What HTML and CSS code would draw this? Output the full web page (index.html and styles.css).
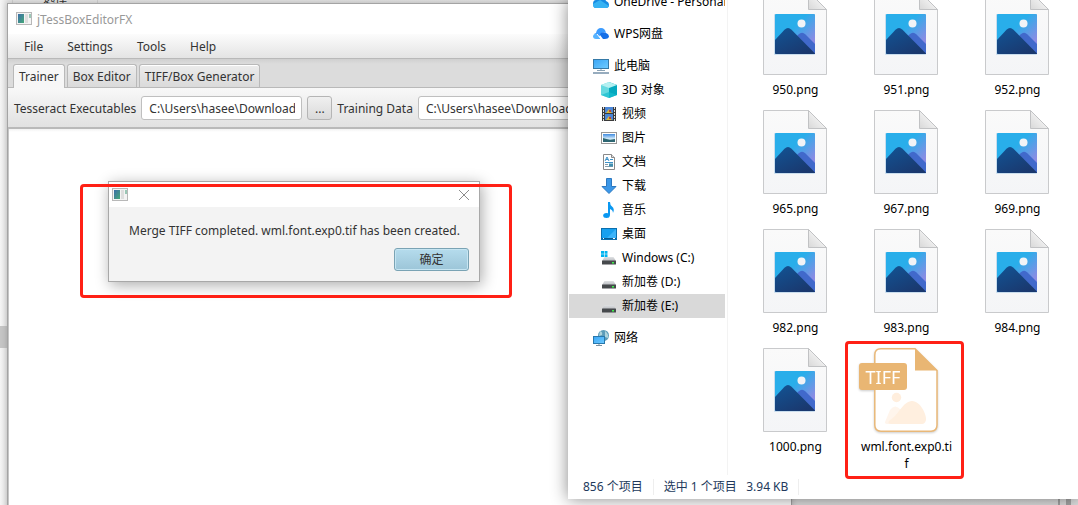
FILE: index.html
```html
<!DOCTYPE html>
<html lang="zh-CN">
<head>
<meta charset="utf-8">
<title>jTessBoxEditorFX</title>
<link rel="stylesheet" href="styles.css">
</head>
<body>
<svg width="0" height="0" class="defs" aria-hidden="true">
  <defs>
    <linearGradient id="paper" x1="0" y1="0" x2="0" y2="1"><stop offset="0" stop-color="#fafafa"/><stop offset="1" stop-color="#f4f5f7"/></linearGradient>
    <linearGradient id="fold" x1="0" y1="1" x2="1" y2="0"><stop offset="0" stop-color="#d8d8d8"/><stop offset=".6" stop-color="#f2f2f2"/></linearGradient>
    <linearGradient id="sky" x1="0" y1="0" x2="1" y2="1"><stop offset=".4" stop-color="#29aeea"/><stop offset=".8" stop-color="#8a8ce4"/></linearGradient>
    <linearGradient id="hill" x1="0" y1="0" x2=".7" y2="1"><stop offset="0" stop-color="#125495"/><stop offset="1" stop-color="#1a386e"/></linearGradient>
    <linearGradient id="screen" x1="0" y1="0" x2="1" y2="1"><stop offset="0" stop-color="#3aa5f5"/><stop offset="1" stop-color="#6fcbff"/></linearGradient>
    <linearGradient id="photo" x1="0" y1="0" x2="0" y2="1"><stop offset="0" stop-color="#3f8be0"/><stop offset=".6" stop-color="#d5ecfa"/><stop offset="1" stop-color="#2c6d78"/></linearGradient>
    <linearGradient id="appicon" x1="0" y1="0" x2="1" y2="1"><stop offset="0" stop-color="#3c6ea8"/><stop offset="1" stop-color="#45a878"/></linearGradient>
    <linearGradient id="drive" x1="0" y1="0" x2="0" y2="1"><stop offset="0" stop-color="#e0e2e4"/><stop offset="1" stop-color="#b9bcc0"/></linearGradient>
    <symbol id="i-app" viewBox="0 0 16 14">
      <rect x=".5" y=".5" width="15" height="12" fill="#f4f4f4" stroke="#b8b8b8"/>
      <rect x="2" y="2" width="6" height="9" fill="url(#appicon)"/><rect x="9" y="2" width="3" height="9" fill="#dedede"/><path d="M13 2h2v4h-2z" fill="#9bc7b6"/>
    </symbol>
    <symbol id="i-png" viewBox="0 0 64 84">
      <path d="M.5 .5H45.500L63.500 18.500V83.500H.5Z" fill="url(#paper)" stroke="#c9cacc"/>
      <path d="M45.500 .5V18.500H63.500Z" fill="url(#fold)" stroke="#c1c2c4"/>
      <rect x="11" y="23" width="41" height="41" rx="1" fill="#c9dded"/>
      <rect x="12" y="23" width="40" height="40" rx="1" fill="url(#sky)"/>
      <circle cx="38.500" cy="32.500" r="4" fill="#f1f3f6"/>
      <path d="M25 54L35.500 43.500Q39 40 42.500 43.500L52 53V63H25Z" fill="#4169cb"/>
      <path d="M12 49L21.500 38.800Q25 35.300 28.500 38.800L52 62.500Q52 63 51 63H13Q12 63 12 62Z" fill="url(#hill)"/>
    </symbol>
    <symbol id="i-drive" viewBox="0 0 16 16">
      <path d="M3.500 7H12.500L15 11H1Z" fill="url(#drive)"/><rect x="1" y="10.500" width="14" height="4" rx=".6" fill="#46494c"/><rect x="11" y="12" width="2" height="1.500" fill="#3df04a"/>
    </symbol>
  </defs>
</svg>

<div class="desktop">
  <div class="backdrop">
    <span class="backdrop-tab">选择</span>
    <span class="backdrop-thumb"></span>
    <span class="backdrop-edge"></span>
  </div>

  <main class="window app">
    <header class="titlebar"><svg class="app-icon"><use href="#i-app"/></svg><span>jTessBoxEditorFX</span></header>
    <nav class="menubar">
      <button>File</button><button>Settings</button><button>Tools</button><button>Help</button>
    </nav>
    <div class="tabs" role="tablist">
      <button class="tab active" role="tab" aria-selected="true">Trainer</button>
      <button class="tab" role="tab">Box Editor</button>
      <button class="tab" role="tab">TIFF/Box Generator</button>
    </div>
    <div class="toolbar">
      <label for="exe">Tesseract Executables</label>
      <input id="exe" type="text" value="C:\Users\hasee\Downloads">
      <button class="browse">...</button>
      <label for="data">Training Data</label>
      <input id="data" class="data" type="text" value="C:\Users\hasee\Downloads">
    </div>
    <div class="workspace"></div>
  </main>

  <section class="window dialog" role="dialog" aria-labelledby="msg">
    <header class="dialog-title">
      <svg class="app-icon"><use href="#i-app"/></svg>
      <button class="close" aria-label="Close"><svg width="12" height="12"><path d="M1 1L11 11M11 1L1 11" stroke="#8c8c8c" fill="none"/></svg></button>
    </header>
    <div class="dialog-body">
      <p id="msg">Merge TIFF completed. wml.font.exp0.tif has been created.</p>
      <button class="ok">确定</button>
    </div>
  </section>
  <div class="mark mark-dialog"></div>

  <section class="window explorer">
    <div class="panes">
      <nav class="tree">
        <a class="node root"><svg viewBox="0 0 16 16"><path d="M2 14Q0 13 0 10Q0 6 3 6Q5 2 9 3Q12 4 13 7Q16 8 16 11Q16 14 13 14Z" fill="#168be2"/><path d="M0 10L7 6L16 12Q15 14 13 14H3Q0 14 0 10Z" fill="#35b2f3"/></svg>OneDrive - Personal</a>
        <a class="node root"><svg viewBox="0 0 16 16"><path d="M3 7Q4 2 8 2Q12 2 13 7Q10 5 8 8L5 12Q4 8 1 8Z" fill="#3c9cff"/><path d="M0 10Q1 7 4 8L8 13H3Q0 13 0 10Z" fill="#57b3ff"/><path d="M7 8Q9 5 13 7Q16 8 16 11Q15 13 12 13H10L7 9Z" fill="#1670e8"/><path d="M4 8L8 13" stroke="#fff"/></svg>WPS网盘</a>
        <a class="node root"><svg viewBox="0 0 16 16"><rect x=".5" y="1.500" width="15" height="9" fill="url(#screen)" stroke="#3579a7"/><path d="M8 11V13M4 12.500H12" stroke="#8ba3b5"/><path d="M0 15H16" stroke="#7490a8" stroke-width="1.500"/></svg>此电脑</a>
        <a class="node"><svg viewBox="0 0 16 16"><path d="M0 3L8 0V16L0 13Z" fill="#67d9e0"/><path d="M8 0L16 3V13L8 16Z" fill="#04a9bf"/><path d="M0 3L8 0L16 3L8 6Z" fill="#b4f0f1"/><path d="M0 13L8 10L16 13L8 16Z" fill="#17bdce" opacity=".7"/></svg>3D 对象</a>
        <a class="node"><svg viewBox="0 0 16 16"><rect x="1" y="1" width="14" height="14" fill="#3b3b3b"/><path d="M2.500 1V15M13.500 1V15" stroke="#ddd" stroke-dasharray="2 1"/><rect x="4" y="1" width="8" height="6" fill="#4a86d8"/><rect x="4" y="8" width="8" height="6" fill="#4a86d8"/><path d="M5 7L8 3L11 7ZM5 14L8 10L11 14Z" fill="#d8b93c"/><path d="M8 4h2v2H8zM8 11h2v2H8z" fill="#bb4638"/></svg>视频</a>
        <a class="node"><svg viewBox="0 0 16 16"><rect x=".5" y="2.500" width="15" height="11" fill="#fff" stroke="#979797"/><rect x="2" y="4" width="12" height="8" fill="url(#photo)"/><path d="M2 8L9 10L14 9V12H2Z" fill="#2d6672"/></svg>图片</a>
        <a class="node"><svg viewBox="0 0 16 16"><path d="M2.500 .5H10.500L13.500 3.500V15.500H2.500Z" fill="#fff" stroke="#898989"/><path d="M10.500 .5V3.500H13.500" fill="#ddd" stroke="#898989"/><path d="M4 7L6 3L8 7M5 5.500H7M9 5.500H12M4 8.500H12" stroke="#3c91c7" fill="none"/><path d="M4 10.500H7M4 12.500H12" stroke="#879eab"/><rect x="8" y="9.500" width="4" height="3" fill="#418fb0"/></svg>文档</a>
        <a class="node"><svg viewBox="0 0 16 16"><path d="M5.500 .5H10.500V8.500H15L8 15.500L1 8.500H5.500Z" fill="#3b97e8" stroke="#2c78c0"/></svg>下载</a>
        <a class="node"><svg viewBox="0 0 16 16"><ellipse cx="5.500" cy="13.500" rx="3.300" ry="2.500" fill="#0a98f1"/><path d="M7 0H9Q9 3 11 4.500Q14 7 12 11Q12 8 9 7V13.500H7Z" fill="#0a98f1"/></svg>音乐</a>
        <a class="node"><svg viewBox="0 0 16 16"><rect x=".5" y="2.500" width="15" height="11" fill="#17a0ef" stroke="#0b6fae"/><path d="M6 12L15 3V12Z" fill="#3bb4fa"/><path d="M1 12.500H15" stroke="#075b91"/><path d="M2 12.500H3M12 12.500H14" stroke="#fff"/></svg>桌面</a>
        <a class="node"><svg viewBox="0 0 16 16"><use href="#i-drive"/><path d="M0 1H3V3.700H0ZM3.600 1H6.500V3.700H3.600ZM0 4.300H3V7H0ZM3.600 4.300H6.500V7H3.600Z" fill="#00b4f0"/></svg>Windows (C:)</a>
        <a class="node"><svg><use href="#i-drive"/></svg>新加卷 (D:)</a>
        <a class="node selected"><svg><use href="#i-drive"/></svg>新加卷 (E:)</a>
        <a class="node root network"><svg viewBox="0 0 16 16"><circle cx="10.500" cy="5.500" r="5.500" fill="#5b9cb9"/><path d="M7 1Q10 2 9 5L6 6ZM12 1Q16 4 15 8L12 7Z" fill="#aed3dc"/><rect x=".5" y="6.500" width="11" height="7" fill="url(#screen)" stroke="#2878ac"/><path d="M6 14V15M3 15.500H9" stroke="#7890a0"/></svg>网络</a>
      </nav>
      <div class="files">
        <figure><svg><use href="#i-png"/></svg><figcaption>950.png</figcaption></figure>
        <figure><svg><use href="#i-png"/></svg><figcaption>951.png</figcaption></figure>
        <figure><svg><use href="#i-png"/></svg><figcaption>952.png</figcaption></figure>
        <figure><svg><use href="#i-png"/></svg><figcaption>965.png</figcaption></figure>
        <figure><svg><use href="#i-png"/></svg><figcaption>967.png</figcaption></figure>
        <figure><svg><use href="#i-png"/></svg><figcaption>969.png</figcaption></figure>
        <figure><svg><use href="#i-png"/></svg><figcaption>982.png</figcaption></figure>
        <figure><svg><use href="#i-png"/></svg><figcaption>983.png</figcaption></figure>
        <figure><svg><use href="#i-png"/></svg><figcaption>984.png</figcaption></figure>
        <figure><svg><use href="#i-png"/></svg><figcaption>1000.png</figcaption></figure>
        <figure>
          <svg class="tiff" viewBox="0 0 64 84">
            <path d="M7 .8H41L63 22.500V77Q63 83.200 57 83.200H7Q.8 83.200 .8 77V7Q.8 .8 7 .8Z" fill="#fff" stroke="#e9b878" stroke-width="1.500"/>
            <path d="M41 .5L63.500 22.500H41Z" fill="#e9b673"/>
            <circle cx="22.500" cy="49.500" r="4.700" fill="#ffeedd"/>
            <path d="M11 74L16 62Q21 55 27 62L34 76H15Q10 76 11 74Z" fill="#fff5ec"/>
            <path d="M18 76Q12 76 16 72C24 68 29 53 38 53C47 53 53 68 52 72Q51 76 48 76Z" fill="#ffefdf"/>
            <rect x="-15" y="15" width="48" height="27" rx="3" fill="#e9b673"/>
            <text x="9" y="36" text-anchor="middle" class="tiff-text">TIFF</text>
          </svg>
          <figcaption>wml.font.exp0.tif</figcaption>
        </figure>
      </div>
    </div>
    <footer class="status"><span>856 个项目</span><span>选中 1 个项目&nbsp;&nbsp; 3.94 KB</span></footer>
  </section>
  <div class="mark mark-file"></div>
</div>
</body>
</html>
```
FILE: styles.css
```css
* { box-sizing: border-box; }
body {
  margin: 0;
  font: 12px/17px "Noto Sans", "Noto Sans CJK SC", sans-serif;
  color: #333;
}
button, input { font: inherit; color: inherit; }
.defs { position: absolute; }
.desktop { position: relative; height: 100vh; overflow: hidden; background: #d6d6d6; }

.backdrop {
  position: absolute;
  inset: 0;
  background: linear-gradient(90deg, #f5f5f5, #e2e2e2 8px, #dedede);
}
.backdrop-tab {
  position: absolute;
  left: 12px;
  top: -10px;
  width: 86px;
  padding: 0 30px;
  border: solid #cfcfcf;
  border-width: 0 1px;
}
.backdrop-thumb { position: absolute; left: 0; top: 326px; width: 8px; height: 22px; background: #c5c5c5; }
.backdrop-edge { position: absolute; right: 7px; bottom: 0; width: 13px; height: 6px; border: solid #a5a5a5; border-width: 0 5px 0 2px; }

.window { position: absolute; display: flex; flex-direction: column; }
.app {
  left: 7px;
  top: 3px;
  bottom: -8px;
  width: 785px;
  border: 1px solid #a4a4a4;
  background: #fff;
  box-shadow: 0 0 6px #0003;
}
.app-icon { width: 16px; height: 14px; flex: none; }
.titlebar { display: flex; align-items: center; gap: 5px; height: 30px; padding-left: 8px; color: #999; }
.menubar {
  display: flex;
  gap: 24px;
  height: 25px;
  padding-left: 16px;
  border-bottom: 1px solid #b9b9b9;
  background: linear-gradient(#fcfcfc, #e4e4e4);
}
.menubar button { padding: 0; border: 0; background: none; }
.tabs {
  display: flex;
  align-items: flex-end;
  gap: 2px;
  height: 29px;
  padding-left: 5px;
  border-bottom: 1px solid #b9b9b9;
  background: linear-gradient(#d0d0d0, #dcdcdc 5px);
}
.tab {
  height: 23px;
  padding: 0 5px;
  border: 1px solid #b9b9b9;
  border-bottom: 0;
  border-radius: 3px 3px 0 0;
  background: linear-gradient(#ececec, #dadada);
  box-shadow: inset 0 1px #fff;
}
.tab.active { height: 24px; margin-bottom: -1px; background: #f7f7f7; }
.toolbar {
  display: flex;
  align-items: center;
  gap: 5px;
  height: 41px;
  padding: 1px 0 0 6px;
  border-bottom: 2px solid #b9b9b9;
  background: linear-gradient(#f8f8f8, #e1e1e1);
}
.toolbar label { white-space: nowrap; flex: none; }
.toolbar input {
  width: 161px;
  height: 24px;
  padding: 0 6px 0 7px;
  border: 1px solid #bfbfbf;
  border-radius: 3px;
  background: #fff;
}
.toolbar .data { flex: 1; }
.browse {
  width: 25px;
  height: 24px;
  padding: 0;
  border: 1px solid #b5b5b5;
  border-radius: 3px;
  background: linear-gradient(#f0f0f0, #dadada);
}
.workspace { flex: 1; border-left: 1px solid #c6c6c6; background: linear-gradient(#f2f2f2, #fff 3px); }

.dialog {
  left: 108px;
  top: 181px;
  width: 372px;
  border: 1px solid #a8a8a8;
  background: #f3f3f3;
  box-shadow: 2px 3px 14px #0005;
}
.dialog-title { display: flex; justify-content: space-between; align-items: center; height: 25px; padding: 0 9px 0 3px; background: #fff; }
.close { display: flex; padding: 0; border: 0; background: none; }
.dialog-body { display: flex; flex-direction: column; align-items: flex-end; gap: 9px; padding: 15px 10px 10px 20px; }
.dialog-body p { align-self: stretch; margin: 0; white-space: nowrap; }
.ok {
  width: 75px;
  height: 23px;
  padding: 0;
  border: 1px solid #7aa3b4;
  border-radius: 3px;
  background: linear-gradient(#b5dced, #9cc5d8);
  box-shadow: inset 0 0 0 1px #c6e5f2;
}

.mark { position: absolute; border: 3px solid #ff2015; border-radius: 4px; }
.mark-dialog { left: 80px; top: 184px; width: 432px; height: 114px; }
.mark-file { left: 845px; top: 341px; width: 119px; height: 138px; }

.explorer {
  left: 568px;
  right: 0;
  top: 0;
  bottom: 6px;
  background: #fff;
  color: #000;
  box-shadow: 0 0 16px #0007;
}
.panes { display: flex; flex: 1; min-height: 0; overflow: hidden; }
.tree { flex: none; width: 160px; padding: 0 2px 0 1px; border-right: 1px solid #f3f3f3; line-height: 16px; }
.node { display: flex; align-items: center; gap: 5px; height: 24px; padding-left: 32px; white-space: nowrap; overflow: hidden; }
.node svg { width: 16px; height: 16px; flex: none; }
.root { padding-left: 24px; margin-top: 8px; }
.root:first-child { margin-top: -10px; }
.selected { background: #d9d9d9; }
.files {
  display: grid;
  grid-template-columns: repeat(auto-fill, 111px);
  grid-auto-rows: 119px;
  flex: 1;
  margin-top: -9px;
  padding-left: 11px;
}
.files figure { display: flex; flex-direction: column; align-items: center; gap: 6px; margin: 0; }
.files figure svg { width: 64px; height: 84px; flex: none; overflow: visible; }
.files figcaption { width: 96px; padding-left: 2px; text-align: center; word-break: break-all; }
.tiff { filter: drop-shadow(0 1px 1px #0003); }
.tiff-text { font: 18px "Noto Sans", sans-serif; fill: #fff; }
.status { display: flex; align-items: center; height: 24px; padding-left: 15px; color: #22395b; line-height: 16px; }
.status span { padding-right: 10px; margin-right: 10px; border-right: 1px solid #eee; }
```
